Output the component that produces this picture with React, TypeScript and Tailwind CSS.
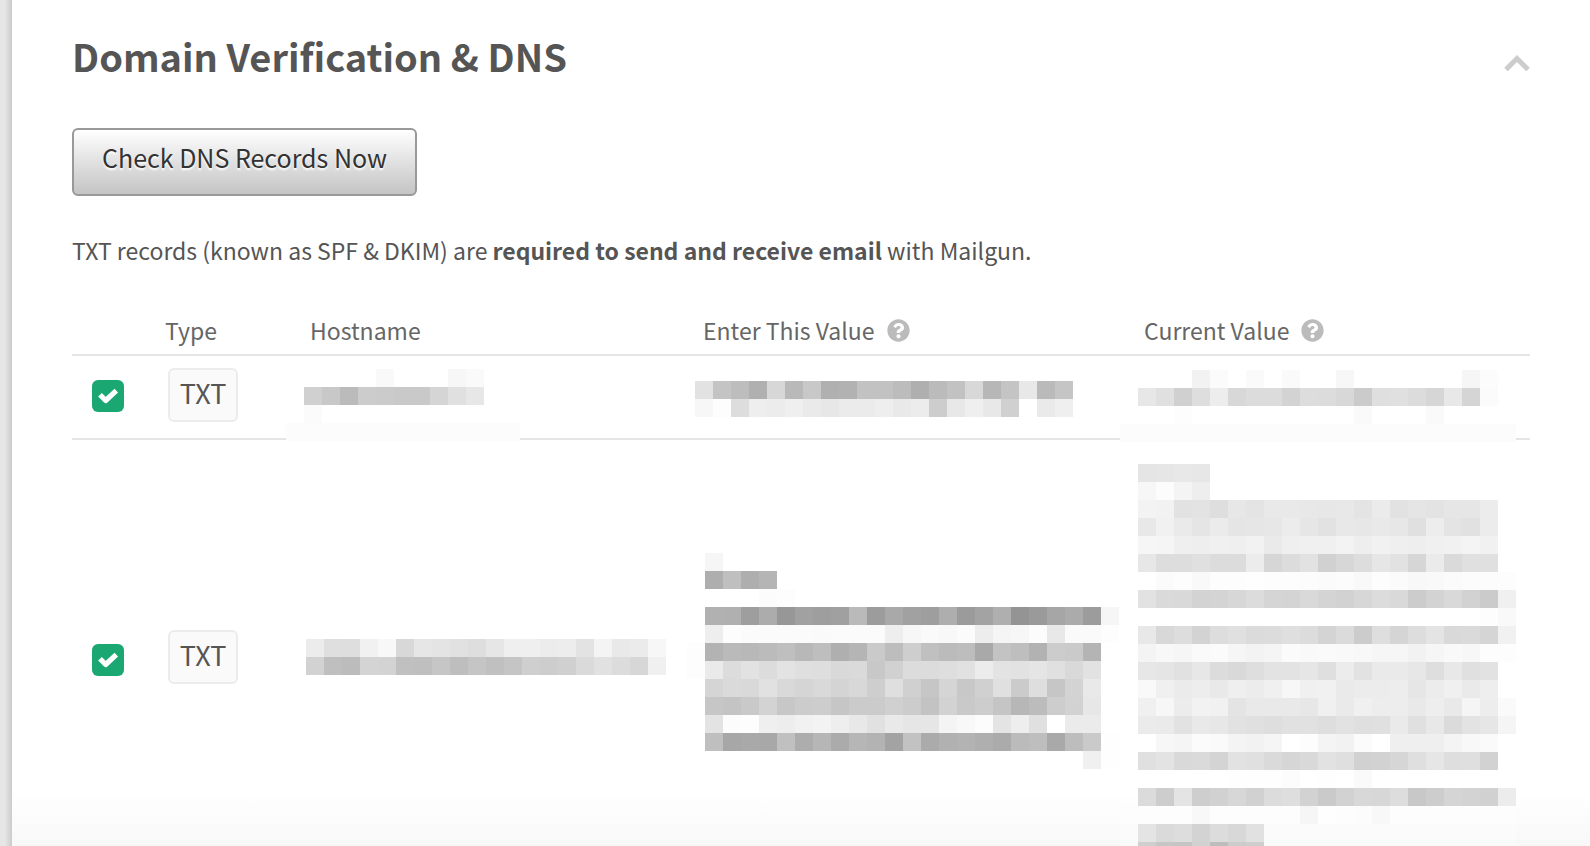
import { FaQuestionCircle } from "react-icons/fa";

const CELL = 18;

// Each row lists one grey level (two hex digits) per cell; ".." leaves a cell empty.
const HOST_A = [
  ".. .. .. .. .. f9 .. .. .. f7 fa .. ..",
  ".. d0 c8 bb cc cb c9 c9 d5 e0 e7 .. ..",
  ".. fb .. .. .. .. .. .. .. .. .. .. ..",
  "fc fc fc fc fc fc fc fc fc fc fc fc fc",
];

const ENTER_A = [
  "e2 c4 bd b0 d7 b9 c8 b0 b2 c2 c2 bc af bb c2 d8 b7 c4 e8 ba c5",
  "f7 fd dd ee ec ef ea e7 eb eb ee e9 ec cd e8 ef e8 d0 ff ea ef",
];

const CURRENT_A = [
  ".. .. .. .. f2 fb .. fa .. fa .. .. f7 .. .. .. .. .. .. f6 fc ..",
  ".. e7 e0 d0 de ed d8 dc dc d3 dd dc d8 cb df e0 dc d6 e8 d5 fb ..",
  ".. .. .. fd .. .. .. .. .. .. .. .. .. fa .. .. .. fa .. .. .. ..",
  "fc fc fc fc fc fc fc fc fc fc fc fc fc fc fc fc fc fc fc fc fc fc",
];

const HOST_B = [
  "ec df de f1 f8 d8 e6 e4 e1 de e6 ef ef ec ed e3 f4 e9 eb f7",
  "d2 bf bc d4 d3 c0 bf c6 be c5 c0 c5 cf cd d0 da e1 dc d7 f0",
];

const ENTER_B = [
  ".. f6 .. .. .. .. .. .. .. .. .. .. .. .. .. .. .. .. .. .. .. .. .. ..",
  ".. ae bf ae b5 .. .. .. .. .. .. .. .. .. .. .. .. .. .. .. .. .. .. ..",
  ".. .. .. .. fc fd .. .. .. .. .. .. .. .. .. .. .. .. .. .. .. .. .. ..",
  ".. b1 b0 9e ac 97 a1 9e a0 ba 9c a9 a1 9e ae 9b a3 af 94 9a a6 ab 9c f6",
  ".. ee fd fb fb fb fb fa fb fb fb ee f7 fa f8 fb ed f5 f7 fc e8 fa fa fd",
  "fd b3 ba b8 bb bf b8 be af b5 ca bd ce c0 bb bd a9 c3 be b2 cc ca b4 ..",
  "fd ea dc e2 dc e3 df de d9 da c8 d1 dc dc de e1 ec e3 e2 e5 e0 d9 e2 ..",
  ".. d5 da d9 e1 d9 d5 d9 d4 d8 ce df d0 c6 d5 c8 d0 e0 cb de c6 d3 e9 ..",
  ".. c6 c4 c9 d3 c7 cc cd c6 cb cb d0 cc c3 d2 c9 cd c5 b7 bc cd d2 e7 ..",
  ".. e3 fc fd ef ed f1 f3 ee e8 e1 e9 e6 e6 f4 f8 fc e4 ee e0 ff eb eb ..",
  ".. bf a7 a9 a8 c0 ad b6 ab b6 b3 a3 c2 ab b1 b3 af ab bb be a9 bd ca fe",
  ".. .. .. .. .. .. .. .. .. .. .. .. .. .. .. .. .. .. .. .. .. .. f0 fe",
];

const CURRENT_B = [
  ".. e5 e6 e8 e7 .. .. .. .. .. .. .. .. .. .. .. .. .. .. .. .. ..",
  ".. f7 fc f4 ee .. .. .. .. .. .. .. .. .. .. .. .. .. .. .. .. ..",
  ".. f3 f2 e2 e3 de e7 e4 e9 e9 e8 e7 e8 e4 eb e2 e5 e3 e6 e6 ec ..",
  ".. e8 f1 ea e5 eb e5 e6 e7 ec e6 e2 e8 e7 e9 e7 e0 ed e4 e1 ec ..",
  ".. f6 f5 ef ee f0 ef f2 ea ef f0 f0 f3 ee f1 ef ee f0 f1 f4 f1 ..",
  ".. e7 dd dd e0 dc dc ec d6 dc e2 d1 d7 dd e6 e2 d6 eb da e0 e0 ..",
  ".. .. fb fd f9 fd fd fe fd fd fc fb fc f9 fd fb f8 f9 fb fc fc fd",
  ".. e2 da d9 d3 d4 d7 dc d5 d4 d9 d4 d2 d7 dc d9 cc d3 d9 d2 cb f0",
  ".. .. .. .. .. .. .. .. .. .. .. .. .. .. .. .. .. .. .. .. fd f9",
  ".. e8 d8 dd d3 dd e0 db dc df dc d4 db cc de d5 dd e4 d9 da d5 f1",
  ".. f4 f8 f6 fa fb f6 f3 f5 fb f9 fa f9 f8 f6 f6 f2 f6 f9 f7 fd fd",
  ".. e7 e5 e1 e7 dc d9 de e3 e3 e6 df ec e2 ea ea e7 de e8 e0 e2 ..",
  ".. f9 f0 eb ed e9 ef ec f0 f7 f0 f1 ea ec ec ed e6 ec f0 ea ee ..",
  ".. f0 f7 ec f2 f1 e4 e9 e9 e9 e7 f0 ea f0 ed ed e9 ee e9 f5 ed fa",
  ".. eb ea e2 e9 e7 e2 e0 de e1 e1 de e2 df e0 ea e0 e8 db e3 e6 f5",
  ".. .. f7 f5 fb fa f4 f2 f5 ff fd f4 f2 fb ff ef ef ef f4 f8 fa ..",
  ".. e0 e3 d9 da d4 e2 e0 da d6 d9 e2 df d1 d2 d6 df e6 de df d2 ..",
  ".. .. .. .. .. .. fe fe fe fc .. fe .. fa .. .. .. .. .. .. .. ..",
  ".. db cd e4 ce d1 d7 d1 dc de d2 ca d2 d8 d7 dd c8 cd d5 d3 d1 ec",
  "fd fd fd fd f8 fd fd fd fd fd f6 fe fd fc f8 fd fd fd fd fd fd fd",
  "fb e4 da dd d3 dc d8 e1 fb fb fb fb fb fb fb fb fb fb fb fb fb fb",
  "fa cf c6 c5 d1 bd cc ce fa fa fa fa fa fa fa fa fa fa fa fa fa fa",
];

function Mosaic({ rows, className = "" }: { rows: string[]; className?: string }) {
  const grid = rows.map((row) => row.split(" "));
  return (
    <svg
      role="img"
      aria-label="Redacted"
      width={grid[0].length * CELL}
      height={grid.length * CELL}
      shapeRendering="crispEdges"
      className={`relative block max-w-none ${className}`}
    >
      {grid.map((row, y) =>
        row.map((tone, x) =>
          tone === ".." ? null : (
            <rect
              key={`${x}-${y}`}
              x={x * CELL}
              y={y * CELL}
              width={CELL}
              height={CELL}
              fill={`#${tone}${tone}${tone}`}
            />
          ),
        ),
      )}
    </svg>
  );
}

function Verified({ label }: { label: string }) {
  return (
    <span className="relative block size-8">
      <input
        type="checkbox"
        defaultChecked
        aria-label={label}
        className="block size-8 appearance-none rounded-md bg-[#1aa771]"
      />
      <svg
        viewBox="0 0 32 32"
        fill="none"
        stroke="#fff"
        strokeWidth="5.2"
        strokeLinejoin="round"
        className="pointer-events-none absolute inset-0 size-8"
      >
        <path d="M8 14.700 13.700 20.500 24.300 10.700" />
      </svg>
    </span>
  );
}

function TypeBadge() {
  return (
    <span className="flex h-[54px] w-[70px] items-center justify-center rounded-md border-2 border-[#ececec] bg-[#fafafa] pb-1 text-[27px] leading-8 text-[#555]">
      TXT
    </span>
  );
}

function Help({ label }: { label: string }) {
  return (
    <button type="button" aria-label={label} className="block text-[#bbb]">
      <FaQuestionCircle className="size-[23px]" />
    </button>
  );
}

const TH = "border-b-2 border-[#e5e5e5] p-0 pb-2 text-left align-bottom font-normal text-[#666]";

export default function App() {
  return (
    <div className="flex h-screen overflow-hidden bg-[#e9e9e9] font-['Noto_Sans_CJK_SC','Source_Sans_Pro',sans-serif] text-[#555]">
      <div className="w-3 shrink-0 bg-linear-to-r from-[#e6e6e6] from-40% to-[#cbcbcb]" />
      <main className="min-w-0 grow bg-[linear-gradient(to_top,#f8f8f8,#ffffff_54px)] pr-[60px] pl-[60px]">
        <header className="flex items-center justify-between pt-7">
          <h2 className="text-[38px] leading-[56px] font-bold">Domain Verification &amp; DNS</h2>
          <button type="button" aria-label="Collapse section" className="mt-3.5 block">
            <svg width="26" height="18" viewBox="0 0 26 18" fill="none" stroke="#ccc" strokeWidth="5">
              <path d="M2 15.500 13 4.500 24 15.500" />
            </svg>
          </button>
        </header>

        <button
          type="button"
          className="mt-11 block h-[68px] rounded-md border-2 border-[#999] bg-linear-to-b from-white to-[#c4c4c4] px-7 pb-2.5 text-[25px] leading-8 text-[#333] [text-shadow:0_2px_2px_#fff]"
        >
          Check DNS Records Now
        </button>

        <p className="mt-[38px] text-[23px] leading-8">
          TXT records (known as SPF &amp; DKIM) are <strong className="font-bold">required to send and receive email</strong>{" "}
          with Mailgun.
        </p>

        <table className="mt-12 w-full table-fixed border-separate border-spacing-0 text-[23px] leading-8">
          <colgroup>
            <col className="w-[93px]" />
            <col className="w-[121px]" />
            <col className="w-[401px]" />
            <col className="w-[433px]" />
            <col />
          </colgroup>
          <thead>
            <tr>
              <th className={TH} aria-label="Status" />
              <th className={TH}>Type</th>
              <th className={`${TH} pl-6`}>Hostname</th>
              <th className={`${TH} pl-4`}>
                <span className="flex items-center gap-3">
                  Enter This Value <Help label="About the value to enter" />
                </span>
              </th>
              <th className={`${TH} pl-6`}>
                <span className="flex items-center gap-3">
                  Current Value <Help label="About the current value" />
                </span>
              </th>
            </tr>
          </thead>
          <tbody>
            <tr className="h-[84px] align-top">
              <td className="border-b-2 border-[#e5e5e5] p-0 pt-6 pl-5">
                <Verified label="First record verified" />
              </td>
              <td className="border-b-2 border-[#e5e5e5] p-0 pt-3 pl-[3px]">
                <TypeBadge />
              </td>
              <td className="border-b-2 border-[#e5e5e5] p-0 pt-[13px]">
                <Mosaic rows={HOST_A} className="-mb-4" />
              </td>
              <td className="border-b-2 border-[#e5e5e5] p-0 pt-[25px] pl-2">
                <Mosaic rows={ENTER_A} />
              </td>
              <td className="border-b-2 border-[#e5e5e5] p-0 pt-[14px]">
                <Mosaic rows={CURRENT_A} className="-mb-4" />
              </td>
            </tr>
            <tr className="h-[434px] align-middle">
              <td className="p-0 pt-1.5 pl-5">
                <Verified label="Second record verified" />
              </td>
              <td className="p-0 pl-[3px]">
                <TypeBadge />
              </td>
              <td className="p-0 pl-5">
                <Mosaic rows={HOST_B} />
              </td>
              <td className="p-0 pt-2">
                <Mosaic rows={ENTER_B} />
              </td>
              <td className="p-0 pt-6 align-top">
                <Mosaic rows={CURRENT_B} />
              </td>
            </tr>
          </tbody>
        </table>
      </main>
    </div>
  );
}
